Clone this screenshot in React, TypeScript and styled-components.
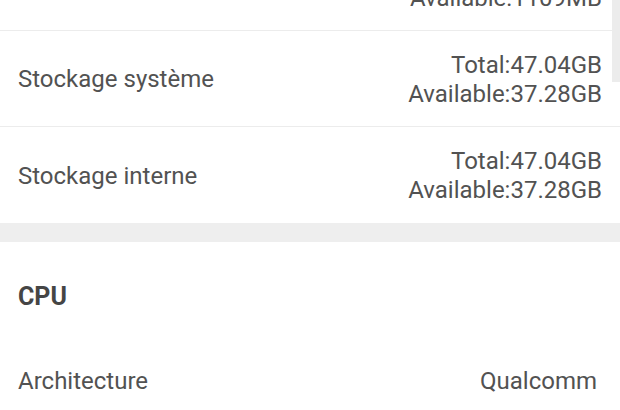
import React from "react";
import styled, { createGlobalStyle } from "styled-components";

const Global = createGlobalStyle`
  html, body {
    margin: 0;
    padding: 0;
    background: #ffffff;
    font-family: Roboto, "Noto Sans", sans-serif;
    -webkit-font-smoothing: antialiased;
  }
`;

type storage = {
  label: string;
  total: string;
  available: string;
};

const storages: storage[] = [
  { label: "Mémoire vive", total: "Total:3.63GB", available: "Available:1109MB" },
  { label: "Stockage système", total: "Total:47.04GB", available: "Available:37.28GB" },
  { label: "Stockage interne", total: "Total:47.04GB", available: "Available:37.28GB" },
];

const Screen = styled.div`
  position: relative;
  width: 620px;
  height: 410px;
  overflow: hidden;
  background: #ffffff;
`;

// the list is scrolled, first row is half out of view
const List = styled.div`
  margin-top: -65px;
  display: flex;
  flex-direction: column;
`;

const Row = styled.div<{ $divider?: boolean }>`
  display: flex;
  align-items: center;
  justify-content: space-between;
  height: 96px;
  padding: 2px 18px 0;
  box-sizing: border-box;
  border-bottom: ${p => (p.$divider ? "1px solid #ececec" : "none")};
  color: #525252;
  font-size: 24px;
  line-height: 29px;
`;

const Label = styled.span``;

const Values = styled.div`
  display: flex;
  flex-direction: column;
  align-items: flex-end;
`;

const Gap = styled.div`
  height: 19px;
  background: #eeeeee;
`;

const Header = styled.div`
  padding: 40px 18px 21px;
  font-size: 25px;
  line-height: 29px;
  font-weight: 700;
  color: #454545;
`;

const Value = styled.span`
  padding-right: 5px;
`;

const ScrollThumb = styled.div`
  position: absolute;
  top: 0;
  right: 0;
  width: 8px;
  height: 82px;
  background: #ececec;
`;

const App: React.FunctionComponent = () => {
  return (
    <Screen>
      <Global />
      <List>
        {storages.map((s, i) => (
          <Row key={s.label} $divider={i < storages.length - 1}>
            <Label>{s.label}</Label>
            <Values>
              <span>{s.total}</span>
              <span>{s.available}</span>
            </Values>
          </Row>
        ))}
        <Gap />
        <Header>CPU</Header>
        <Row>
          <Label>Architecture</Label>
          <Value>Qualcomm</Value>
        </Row>
      </List>
      <ScrollThumb />
    </Screen>
  );
};

export default App;
